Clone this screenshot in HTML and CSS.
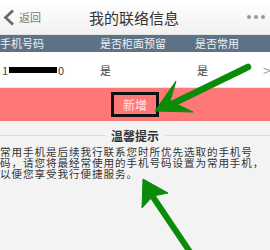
FILE: index.html
```html
<!DOCTYPE html>
<html>
<head>
<meta charset="utf-8">
<link rel="stylesheet" href="styles.css">
</head>
<body>
<div class="page">
  <header class="topbar">
    <div class="back">
      <svg class="chev" width="13" height="17" viewBox="0 0 13 17"><path d="M11 1.5 L3.5 8.5 L11 15.5" fill="none" stroke="#6b6b6b" stroke-width="2.8"/></svg>
      <span class="back-text">返回</span>
    </div>
    <div class="title">我的联络信息</div>
    <div class="more"><i></i><i></i><i></i></div>
  </header>
  <div class="thead">
    <span>手机号码</span>
    <span>是否柜面预留</span>
    <span>是否常用</span>
  </div>
  <div class="trow">
    <span class="num">1<i class="redact"></i>0</span>
    <span>是</span>
    <span>是</span>
    <span class="go">&gt;</span>
  </div>
  <div class="addbar">
    <div class="addbtn">新增</div>
  </div>
  <section class="tips">
    <div class="tips-head"><span class="line"></span><span class="tips-title">温馨提示</span><span class="line"></span></div>
    <div class="tips-text">
      <span class="tl">常用手机是后续我行联系您时所优先选取的手机号</span>
      <span class="tl">码，请您将最经常使用的手机号码设置为常用手机，</span>
      <span class="tl">以便您享受我行便捷服务。</span>
    </div>
  </section>
  <svg class="arrows" width="270" height="250" viewBox="0 0 270 250">
    <g fill="#0a8c0a" stroke="#0a8c0a" stroke-linejoin="round">
      <line x1="248" y1="67" x2="172" y2="104" stroke-width="6.5" stroke-linecap="round"/>
      <polygon points="155,111 176,81 170,101 193,112" stroke-width="1"/>
      <line x1="190" y1="252" x2="151" y2="194" stroke-width="6"/>
      <polygon points="143,179 168,193 153,196 142,208" stroke-width="1"/>
    </g>
  </svg>
</div>
</body>
</html>
```
FILE: styles.css
```css
* { box-sizing: border-box; margin: 0; padding: 0; }
html, body { width: 270px; height: 250px; overflow: hidden; }
body { font-family: "Noto Sans CJK SC", "Noto Sans", sans-serif; background: #f3f3f3; color: #333; }
.page { position: relative; width: 270px; height: 250px; }
.topbar { height: 35px; display: flex; align-items: center; background: linear-gradient(#ffffff, #f1f1f1); border-bottom: 1px solid #e2e2e2; }
.back { display: flex; align-items: center; padding-left: 2px; width: 60px; }
.chev { display: block; }
.back-text { font-size: 11px; color: #777; margin-left: 4px; }
.title { flex: 1; text-align: center; font-size: 15px; color: #333; margin-left: -2px; }
.more { width: 60px; display: flex; justify-content: flex-end; gap: 3px; padding-right: 5px; }
.more i { width: 4px; height: 4px; border-radius: 50%; background: #999; }
.thead { height: 17px; background: #5d7285; color: #edf1f4; font-size: 11px; display: grid; grid-template-columns: 100px 95px 1fr; align-items: center; line-height: 17px; }
.trow { height: 36px; background: #fff; display: grid; grid-template-columns: 100px 97px 1fr 7px; align-items: center; font-size: 11px; color: #444; border-bottom: 1px solid #f6dede; }
.num { display: flex; align-items: center; padding-left: 2px; }
.redact { display: inline-block; width: 48px; height: 6px; background: #000; margin: 0 1px; }
.go { color: #999; font-size: 14px; }
.addbar { height: 33px; background: #ff7878; display: flex; justify-content: center; align-items: center; }
.addbtn { width: 48px; height: 25px; border: 3px solid #111; color: #ffe6e6; font-size: 12px; display: flex; align-items: center; justify-content: center; }
.tips { padding-top: 7px; }
.tips-head { display: flex; align-items: center; gap: 6px; height: 14px; }
.line { flex: 1; height: 1px; background: #ddd; }
.tips-title { font-size: 12px; font-weight: bold; color: #333; }
.tips-text { display: flex; flex-direction: column; margin-top: 4px; }
.tl { display: block; height: 11px; font-size: 10.6px; letter-spacing: 0.9px; line-height: 11px; color: #333; white-space: nowrap; }
.arrows { position: absolute; left: 0; top: 0; pointer-events: none; }
```
